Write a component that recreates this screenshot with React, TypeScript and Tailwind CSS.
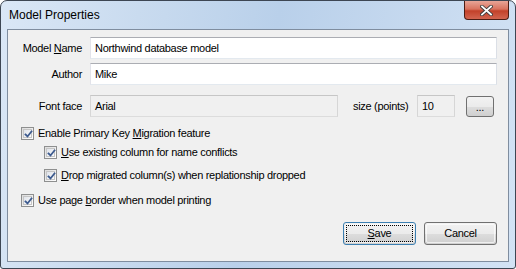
import React from "react";

function Check() {
  return (
    <span className="relative inline-block w-[13px] h-[13px] shrink-0 border border-[#8e8f8f] bg-[linear-gradient(135deg,#dcdcdc,#ffffff)]">
      <span className="absolute inset-[1px] border border-[#c5c5c5] bg-[linear-gradient(135deg,#dfe3ea,#fbfbfb)]" />
      <svg className="absolute left-[1px] top-[1px]" width="11" height="11" viewBox="0 0 11 11">
        <path d="M2.5 5.5 L4.5 7.5 L8.5 2.5" fill="none" stroke="#3d5b8f" strokeWidth="1.8" strokeLinecap="square" />
      </svg>
    </span>
  );
}

function CheckRow({ children, indent }: { children: React.ReactNode; indent?: boolean }) {
  return (
    <div className={`flex items-center gap-[4px] h-[13px] ${indent ? "ml-[36px]" : "ml-[13px]"}`}>
      <Check />
      <span className="leading-[13px]">{children}</span>
    </div>
  );
}

function Input({ value, w, disabled }: { value: string; w: string; disabled?: boolean }) {
  return (
    <div
      className={`${w} h-[22px] border flex items-center pl-[4px] ${
        disabled
          ? "bg-[#f0f0f0] border-[#c6c6c6] border-b-[#dcdcdc] border-l-[#d6d6d6] border-r-[#d6d6d6]"
          : "bg-white border-[#abadb3] border-b-[#e3e9ef] border-l-[#e2e3ea] border-r-[#dbdfe6]"
      }`}
    >
      {value}
    </div>
  );
}

function Btn({ children, focus }: { children: React.ReactNode; focus?: boolean }) {
  return (
    <div
      className={`relative w-[73px] h-[23px] rounded-[3px] border ${
        focus ? "border-[#3c7fb1]" : "border-[#707070]"
      } bg-[linear-gradient(#f2f2f2_0%,#ebebeb_50%,#dddddd_51%,#cfcfcf_100%)] flex items-center justify-center`}
    >
      <span className="absolute inset-[1px] rounded-[2px] border border-[#fcfcfc]/70" />
      {focus && <span className="absolute inset-[2px] border border-dotted border-black" />}
      <span className="relative">{children}</span>
    </div>
  );
}

export default function App() {
  return (
    <div className="w-[516px] h-[269px] bg-white" style={{ fontFamily: '"Liberation Sans", Arial, sans-serif' }}>
      <div className="relative w-[516px] h-[269px] border border-[#3d4653] rounded-t-[7px] rounded-b-[3px] bg-[linear-gradient(100deg,#dae7f6_0%,#c9dbef_25%,#b9d0ea_50%,#c6d9ef_75%,#d3e3f5_100%)] flex flex-col px-[6px] pb-[6px]">
        <div className="h-[28px] flex items-center pl-[2px] text-[12px] text-black">
          Model Properties
        </div>
        <div className="absolute right-[6px] top-0 w-[45px] h-[19px] rounded-b-[4px] border border-[#4c1d14] border-t-0 bg-[linear-gradient(#e8a597_0%,#d9735f_45%,#c2412a_55%,#d26550_100%)] flex items-center justify-center">
          <svg width="13" height="11" viewBox="0 0 13 11">
            <path d="M2 1.5 L11 9.5 M11 1.5 L2 9.5" stroke="#3b3b3b" strokeWidth="3.6" strokeLinecap="square" />
            <path d="M2 1.5 L11 9.5 M11 1.5 L2 9.5" stroke="#ffffff" strokeWidth="1.8" strokeLinecap="square" />
          </svg>
        </div>
        <div className="flex-1 border border-[#7f8d9f] bg-[#f0f0f0] text-[11px] tracking-[-0.3px] text-black flex flex-col">
          <div className="mt-[7px] flex items-center">
            <div className="w-[74px] text-right">
              Model <span className="underline">N</span>ame
            </div>
            <div className="ml-[8px]">
              <Input value="Northwind database model" w="w-[407px]" />
            </div>
          </div>
          <div className="mt-[4px] flex items-center">
            <div className="w-[74px] text-right">Author</div>
            <div className="ml-[8px]">
              <Input value="Mike" w="w-[407px]" />
            </div>
          </div>
          <div className="mt-[10px] flex items-center">
            <div className="w-[74px] text-right">Font face</div>
            <div className="ml-[8px]">
              <Input value="Arial" w="w-[248px]" disabled />
            </div>
            <div className="ml-[15px] w-[64px]">size (points)</div>
            <Input value="10" w="w-[38px]" disabled />
            <div className="ml-[11px] relative w-[28px] h-[21px] rounded-[3px] border border-[#707070] bg-[linear-gradient(#f2f2f2_0%,#ebebeb_50%,#dddddd_51%,#cfcfcf_100%)] flex items-center justify-center leading-none pt-[3px]">
              ...
            </div>
          </div>
          <div className="mt-[10px] flex flex-col gap-[6px]">
            <CheckRow>
              Enable Primary Key <span className="underline">M</span>igration feature
            </CheckRow>
            <CheckRow indent>
              <span className="underline">U</span>se existing column for name conflicts
            </CheckRow>
          </div>
          <div className="mt-[10px] flex flex-col gap-[12px]">
            <CheckRow indent>
              <span className="underline">D</span>rop migrated column(s) when replationship dropped
            </CheckRow>
            <CheckRow>
              Use page <span className="underline">b</span>order when model printing
            </CheckRow>
          </div>
          <div className="mt-[15px] flex justify-end gap-[8px] pr-[11px]">
            <Btn focus>
              <span className="underline">S</span>ave
            </Btn>
            <Btn>Cancel</Btn>
          </div>
        </div>
      </div>
    </div>
  );
}
